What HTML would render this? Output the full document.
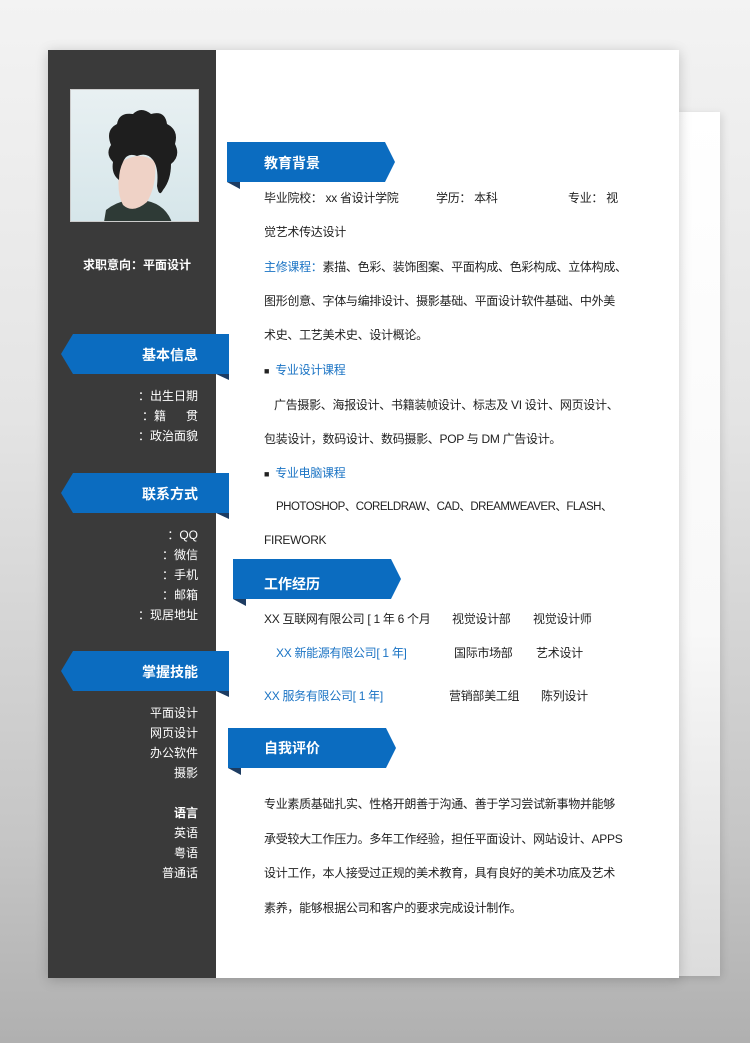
<!DOCTYPE html>
<html><head><meta charset="utf-8"><style>
*{margin:0;padding:0;box-sizing:border-box}
body{width:750px;height:1043px;overflow:hidden;position:relative;background:linear-gradient(180deg,#f3f3f3 0%,#e4e4e4 40%,#c6c6c6 80%,#b0b0b0 100%);font-family:"Liberation Sans","Noto Sans CJK SC",sans-serif;font-size:12px;color:#222}
.a{position:absolute;white-space:nowrap}
.m{letter-spacing:-0.3px}
.back{position:absolute;left:670px;top:112px;width:50px;height:864px;background:linear-gradient(180deg,#fff 0%,#f8f8f8 60%,#dcdcdc 100%);box-shadow:2px 2px 8px rgba(0,0,0,.12)}
.page{position:absolute;left:48px;top:50px;width:631px;height:928px;background:#fff;box-shadow:0 2px 12px rgba(0,0,0,.2)}
.side{position:absolute;left:48px;top:50px;width:168px;height:928px;background:#3a3a3a}
.photo{position:absolute;left:70px;top:89px;width:129px;height:133px;background:linear-gradient(180deg,#e8f0f2,#d6e6ea);overflow:hidden;border:1px solid #ccc}
.w{color:#fff}
.b{color:#1a73c4}
.r{text-align:right}
.t{color:#fff;font-size:14px;font-weight:bold}
</style></head><body>
<div class="back"></div>
<div class="page"></div>
<div class="side"></div>
<div class="photo">
<svg width="129" height="133" viewBox="0 0 129 133">
<path d="M30 150 L35 120 Q50 108 70 110 Q92 112 100 130 L105 150Z" fill="#2e3a36"/>
<path d="M50 72 Q44 100 52 115 Q62 124 76 112 Q86 95 84 72 Q70 60 50 72Z" fill="#efd2c6"/>
<path d="M40 55 Q34 40 46 34 Q48 22 62 24 Q70 16 80 24 Q94 20 96 34 Q108 40 104 54 Q110 66 100 74 Q100 90 92 100 Q88 108 86 96 Q88 78 82 70 Q76 62 66 66 Q56 62 52 72 Q48 80 48 90 Q40 84 42 72 Q34 64 40 55Z" fill="#1e1e1e"/>
</svg>
</div>
<div class="a w" style="left:83px;top:256px;font-weight:bold">求职意向：平面设计</div>

<svg class="a" style="left:61px;top:334px" width="170" height="48"><polygon points="12,0 168,0 168,40 12,40 0,20" fill="#0b6cc0"/><polygon points="155,40 168,40 168,46" fill="#1d3c62"/></svg>
<div class="a t" style="left:142px;top:345px">基本信息</div>
<svg class="a" style="left:61px;top:473px" width="170" height="48"><polygon points="12,0 168,0 168,40 12,40 0,20" fill="#0b6cc0"/><polygon points="155,40 168,40 168,46" fill="#1d3c62"/></svg>
<div class="a t" style="left:142px;top:484px">联系方式</div>
<svg class="a" style="left:61px;top:651px" width="170" height="48"><polygon points="12,0 168,0 168,40 12,40 0,20" fill="#0b6cc0"/><polygon points="155,40 168,40 168,46" fill="#1d3c62"/></svg>
<div class="a t" style="left:142px;top:662px">掌握技能</div>

<div class="a w r" style="right:552px;top:386px;line-height:20px">：出生日期<br>：籍&nbsp;&nbsp;&nbsp;&nbsp;&nbsp;&nbsp;贯<br>：政治面貌</div>
<div class="a w r" style="right:552px;top:525px;line-height:20px">：QQ<br>：微信<br>：手机<br>：邮箱<br>：现居地址</div>
<div class="a w r" style="right:552px;top:703px;line-height:20px">平面设计<br>网页设计<br>办公软件<br>摄影<br><br><b>语言</b><br>英语<br>粤语<br>普通话</div>

<svg class="a" style="left:227px;top:142px" width="170" height="48"><polygon points="0,0 158,0 168,20 158,40 0,40" fill="#0b6cc0"/><polygon points="0,40 13,40 13,47" fill="#1d3c62"/></svg>
<div class="a t" style="left:264px;top:153px">教育背景</div>
<svg class="a" style="left:233px;top:559px" width="170" height="48"><polygon points="0,0 158,0 168,20 158,40 0,40" fill="#0b6cc0"/><polygon points="0,40 13,40 13,47" fill="#1d3c62"/></svg>
<div class="a t" style="left:264px;top:574px">工作经历</div>
<svg class="a" style="left:228px;top:728px" width="170" height="48"><polygon points="0,0 158,0 168,20 158,40 0,40" fill="#0b6cc0"/><polygon points="0,40 13,40 13,47" fill="#1d3c62"/></svg>
<div class="a t" style="left:264px;top:738px">自我评价</div>

<div class="a m" style="left:264px;top:189px">毕业院校： xx 省设计学院</div>
<div class="a m" style="left:436px;top:189px">学历： 本科</div>
<div class="a m" style="left:568px;top:189px">专业： 视</div>
<div class="a m" style="left:264px;top:223px">觉艺术传达设计</div>
<div class="a m" style="left:264px;top:258px"><span class="b">主修课程：</span>素描、色彩、装饰图案、平面构成、色彩构成、立体构成、</div>
<div class="a m" style="left:264px;top:292px">图形创意、字体与编排设计、摄影基础、平面设计软件基础、中外美</div>
<div class="a m" style="left:264px;top:326px">术史、工艺美术史、设计概论。</div>
<div class="a m" style="left:264px;top:361px"><span style="font-size:9px">■</span>&nbsp; <span class="b">专业设计课程</span></div>
<div class="a m" style="left:274px;top:396px">广告摄影、海报设计、书籍装帧设计、标志及 VI 设计、网页设计、</div>
<div class="a m" style="left:264px;top:430px">包装设计，数码设计、数码摄影、POP 与 DM 广告设计。</div>
<div class="a m" style="left:264px;top:464px"><span style="font-size:9px">■</span>&nbsp; <span class="b">专业电脑课程</span></div>
<div class="a" style="left:276px;top:498px;font-size:11.5px;letter-spacing:-0.5px">PHOTOSHOP、CORELDRAW、CAD、DREAMWEAVER、FLASH、</div>
<div class="a m" style="left:264px;top:533px">FIREWORK</div>

<div class="a m" style="left:264px;top:610px">XX 互联网有限公司 [ 1 年 6 个月</div>
<div class="a m" style="left:452px;top:610px">视觉设计部</div>
<div class="a m" style="left:533px;top:610px">视觉设计师</div>
<div class="a b m" style="left:276px;top:644px">XX 新能源有限公司[ 1 年]</div>
<div class="a m" style="left:454px;top:644px">国际市场部</div>
<div class="a m" style="left:536px;top:644px">艺术设计</div>
<div class="a b m" style="left:264px;top:687px">XX 服务有限公司[ 1 年]</div>
<div class="a m" style="left:449px;top:687px">营销部美工组</div>
<div class="a m" style="left:541px;top:687px">陈列设计</div>

<div class="a m" style="left:264px;top:787px;line-height:34.5px">专业素质基础扎实、性格开朗善于沟通、善于学习尝试新事物并能够<br>承受较大工作压力。多年工作经验，担任平面设计、网站设计、APPS<br>设计工作，本人接受过正规的美术教育，具有良好的美术功底及艺术<br>素养，能够根据公司和客户的要求完成设计制作。</div>
</body></html>
